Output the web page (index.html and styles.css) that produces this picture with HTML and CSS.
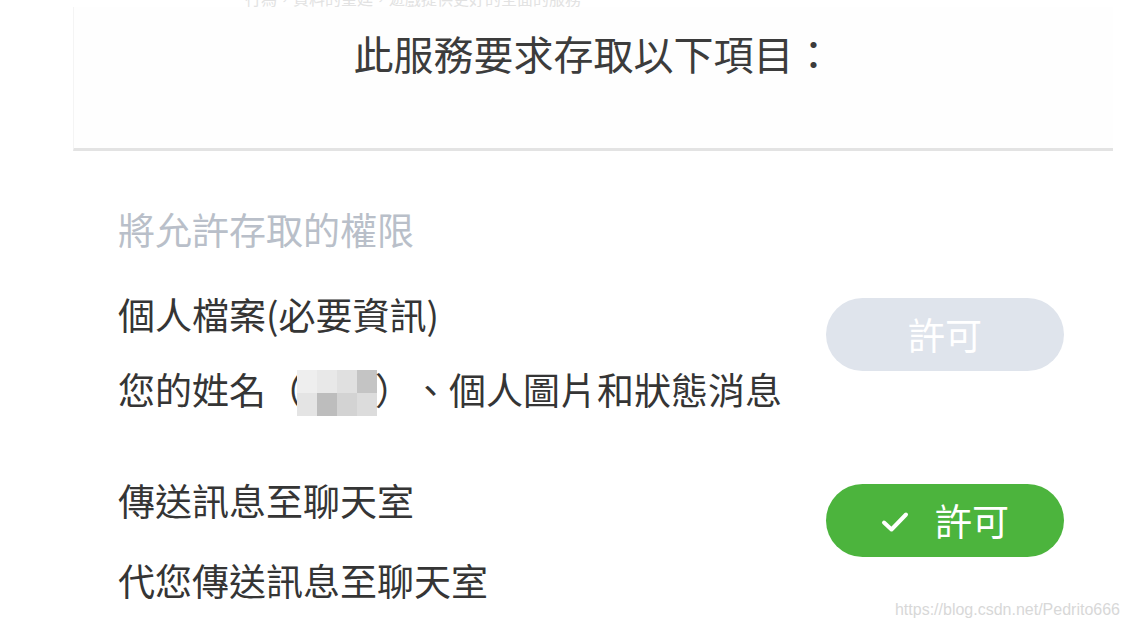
FILE: index.html
```html
<!DOCTYPE html>
<html lang="zh-Hant">
<head>
<meta charset="utf-8">
<title>權限</title>
<link rel="stylesheet" href="styles.css">
</head>
<body>
<div class="page">
  <div class="ghost"><span>行為，資料的皇廷，遊戲提供更好的全面的服務</span></div>
  <header class="head">
    <h1 class="title">此服務要求存取以下項目：</h1>
  </header>
  <main class="content">
    <p class="label">將允許存取的權限</p>
    <section class="perm">
      <div class="perm-text">
        <p class="perm-title">個人檔案(必要資訊)</p>
        <p class="perm-desc">您的姓名（<span class="blur"><i class="c1"></i><i class="c2"></i><i class="c3"></i><i class="c4"></i><i class="c5"></i><i class="c6"></i><i class="c7"></i><i class="c8"></i></span>）、個人圖片和狀態消息</p>
      </div>
      <button class="pill pill-off" type="button">許可</button>
    </section>
    <section class="perm perm-second">
      <div class="perm-text">
        <p class="perm-title">傳送訊息至聊天室</p>
        <p class="perm-desc desc-second">代您傳送訊息至聊天室</p>
      </div>
      <button class="pill pill-on" type="button">
        <svg class="check" viewBox="0 0 28 22" width="28" height="22" aria-hidden="true"><path d="M3 11.5 L10.5 18.5 L25 3.5" fill="none" stroke="#fff" stroke-width="4" stroke-linecap="round" stroke-linejoin="round"/></svg>
        <span>許可</span>
      </button>
    </section>
  </main>
  <div class="watermark">https://blog.csdn.net/Pedrito666</div>
</div>
</body>
</html>
```
FILE: styles.css
```css
* { box-sizing: border-box; }
html, body {
  margin: 0;
  padding: 0;
  background: #ffffff;
}
body {
  font-family: "Noto Sans CJK TC", "Noto Sans CJK SC", "Noto Sans", sans-serif;
  color: #333333;
  width: 1129px;
  height: 629px;
  overflow: hidden;
  text-spacing-trim: space-all;
}
.page {
  position: relative;
  width: 1129px;
  height: 629px;
}
.ghost {
  height: 7px;
  overflow: hidden;
  padding-left: 245px;
}
.ghost span {
  display: block;
  margin-top: -11px;
  font-size: 16px;
  line-height: 18px;
  color: #e2e2e2;
}
.head {
  margin-left: 73px;
  width: 1040px;
  height: 144px;
  padding-top: 26px;
  border-left: 1px solid #f4f4f4;
  border-bottom: 3px solid #e3e3e3;
  background: #fefefe;
}
.title {
  margin: 0;
  font-size: 40px;
  line-height: 40px;
  font-weight: 400;
  text-align: center;
  color: #3c3c3c;
}
.content {
  padding-left: 118px;
  padding-right: 65px;
  padding-top: 60px;
}
.label {
  margin: 0;
  font-size: 37px;
  line-height: 37px;
  color: #b9bfc9;
}
.perm {
  display: flex;
  justify-content: space-between;
  align-items: flex-start;
  margin-top: 48px;
}
.perm-second { margin-top: 70px; }
.perm-title, .perm-desc {
  margin: 0;
  font-size: 37px;
  line-height: 37px;
  color: #353535;
}
.perm-desc { margin-top: 38px; }
.desc-second { margin-top: 43px; }
.blur {
  display: inline-grid;
  vertical-align: middle;
  grid-template-columns: repeat(4, 20px);
  grid-template-rows: repeat(2, 23px);
  width: 80px;
  height: 46px;
  margin: -8px -2px -4px -6px;
}
.blur i { display: block; }
.c1 { background: #eeeeee; }
.c2 { background: #e8e8e8; }
.c3 { background: #e0e0e0; }
.c4 { background: #c4c4c4; }
.c5 { background: #e4e4e4; }
.c6 { background: #bdbdbd; }
.c7 { background: #d3d3d3; }
.c8 { background: #dcdcdc; }
.pill {
  width: 238px;
  height: 73px;
  border: 0;
  border-radius: 37px;
  margin-top: 2px;
  font-family: inherit;
  font-size: 37px;
  line-height: 37px;
  color: #ffffff;
  display: flex;
  align-items: center;
  justify-content: center;
  gap: 26px;
  padding: 0;
}
.pill-off { background: #dfe4ec; }
.pill-on { background: #4cb43d; }
.check { display: block; margin-top: 4px; }
.watermark {
  position: absolute;
  right: 9px;
  bottom: 10px;
  font-family: "Liberation Sans", Arial, sans-serif;
  font-size: 16px;
  color: #d8d8d8;
}
```
